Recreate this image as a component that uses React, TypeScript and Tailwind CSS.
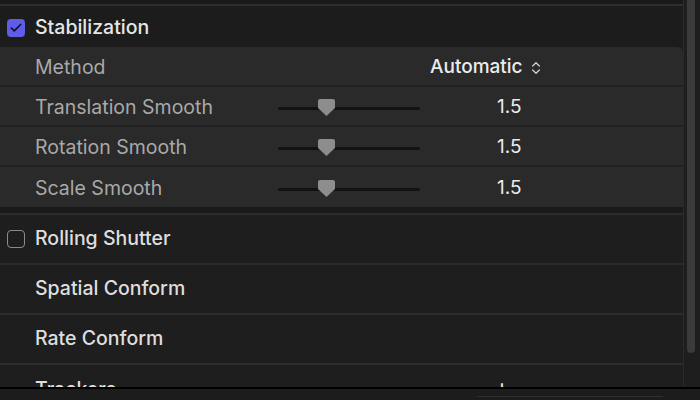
import { Check, ChevronsUpDown } from "lucide-react";

const font = { fontFamily: "Inter, 'Noto Sans', sans-serif" };

function Slider({ pos }: { pos: number }) {
  return (
    <div className="relative h-[20px] w-[142px]">
      <div className="absolute left-0 right-0 top-[9px] h-[3px] rounded-full bg-[#121212]" />
      <svg
        className="absolute top-[1px]"
        style={{ left: pos }}
        width="17"
        height="18"
        viewBox="0 0 17 18"
      >
        <path d="M2 0 H15 Q17 0 17 2 V9 L8.5 17 L0 9 V2 Q0 0 2 0 Z" fill="#8d8d8d" />
      </svg>
    </div>
  );
}

function ParamRow({
  label,
  children,
  last = false,
}: {
  label: string;
  children: React.ReactNode;
  last?: boolean;
}) {
  return (
    <div
      className={`flex h-[40px] items-center pt-[3px] ${last ? "" : "border-b-2 border-[#212121]"}`}
    >
      <span className="w-[278px] pl-[35px] text-[19.5px] text-[#a9a9a9]">{label}</span>
      {children}
    </div>
  );
}

function SliderRow({ label, last }: { label: string; last?: boolean }) {
  return (
    <ParamRow label={label} last={last}>
      <Slider pos={40} />
      <span className="ml-[77px] text-[19px] text-[#ececec]">1.5</span>
    </ParamRow>
  );
}

function Section({ label, box }: { label: string; box?: boolean }) {
  return (
    <div className="flex h-[50px] shrink-0 items-center border-b-2 border-[#2c2c2c] pb-[1px]">
      <div className="flex w-[35px] pl-[7px]">
        {box && (
          <div className="size-[18px] rounded-[4px] border-[1.5px] border-[#8a8a8a]" />
        )}
      </div>
      <span className="text-[19.5px] font-medium text-[#dedede]">{label}</span>
    </div>
  );
}

export default function App() {
  return (
    <div
      className="flex h-[400px] w-[700px] flex-col overflow-hidden bg-[#1e1e1e]"
      style={font}
    >
      <div className="flex h-[387px] shrink-0">
        <div className="flex w-[684px] flex-col overflow-hidden border-r border-[#2a2a2a]">
          <div className="h-[4px] shrink-0 bg-[#191919]" />
          <div className="h-[2px] shrink-0 bg-[#2e2e2e]" />
          {/* Stabilization header */}
          <div className="flex h-[41px] shrink-0 items-center bg-[#1c1c1c] pt-[2px]">
            <div className="flex w-[35px] pl-[7px]">
              <div className="flex size-[18px] items-center justify-center rounded-[4px] bg-[#5f5ce8]">
                <Check className="size-[14px] text-[#14142a]" strokeWidth={3} />
              </div>
            </div>
            <span className="text-[19.5px] font-medium text-[#e6e6e6]">Stabilization</span>
          </div>
          {/* parameters panel */}
          <div className="shrink-0 rounded-tr-[6px] bg-[#2a2a2a]">
            <ParamRow label="Method">
              <div className="ml-[152px] flex items-center gap-[5px] text-[19px] font-medium text-[#ececec]">
                Automatic
                <ChevronsUpDown className="size-[16px] text-[#d0d0d0]" strokeWidth={2} />
              </div>
            </ParamRow>
            <SliderRow label="Translation Smooth" />
            <SliderRow label="Rotation Smooth" />
            <SliderRow label="Scale Smooth" last />
          </div>
          <div className="h-[6px] shrink-0 bg-[#1a1a1a]" />
          <div className="h-[2px] shrink-0 bg-[#2c2c2c]" />
          <Section label="Rolling Shutter" box />
          <Section label="Spatial Conform" />
          <Section label="Rate Conform" />
          <div className="relative flex h-[50px] shrink-0 items-center pb-[1px]">
            <span className="pl-[35px] text-[19.5px] font-medium text-[#dedede]">Trackers</span>
            <span className="absolute left-[495px] top-[6px] text-[21px] text-[#f0f0f0]">+</span>
          </div>
        </div>
        <div className="ml-[3px] mt-0 h-[353px] w-[8px] rounded-b-full bg-[#3b3b3b]" />
      </div>
      <div className="h-[2px] shrink-0 bg-black" />
      <div className="flex-1 bg-[#1c1c1c] pt-[7px]">
        <div className="ml-[477px] h-[1px] w-[186px] bg-[#2e2e2e]" />
      </div>
    </div>
  );
}
